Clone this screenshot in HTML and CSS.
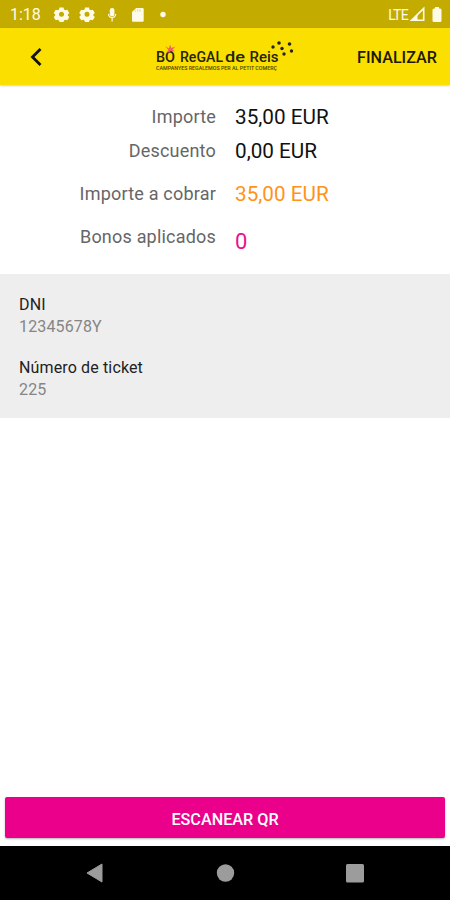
FILE: index.html
```
<!DOCTYPE html>
<html lang="es">
<head>
  <meta charset="utf-8">
  <title>Bo Regal de Reis</title>
  <link rel="stylesheet" href="styles.css">
</head>
<body>
  <div class="app">
    <div class="status-bar">
      <span class="status-time">1:18</span>
      <svg class="status-icons" width="120" height="28" viewBox="0 0 120 28" fill="#fffbe8">
        <g id="gear">
          <path fill-rule="evenodd" d="M11.5 7.5h4l.5 2 1.3.8 2-.6 2 3.4-1.5 1.4v1l1.5 1.4-2 3.4-2-.6-1.3.8-.5 1.5h-4l-.5-1.5-1.3-.8-2 .6-2-3.4 1.5-1.4v-1l-1.5-1.4 2-3.4 2 .6 1.3-.8zM13.5 11.8a2.500 2.500 0 1 0 0 5 2.500 2.500 0 0 0 0-5z"/>
        </g>
        <use href="#gear" x="25.5"/>
        <rect x="61.8" y="8" width="4.600" height="8.500" rx="2.300"/>
        <path d="M60.500 14a3.600 3.600 0 0 0 7.200 0M64.100 17.500v4" fill="none" stroke="#fffbe8" stroke-width="1.200"/>
        <path d="M88.200 8h6.300q1.200 0 1.200 1.200v11.300q0 1.200-1.200 1.200h-9.300q-1.200 0-1.200-1.200v-8.500z"/>
        <path d="M87.300 9.800v2M89.700 9v2.800M92.100 9v2.800" stroke="#c4ab00" stroke-width=".4"/>
        <circle cx="115" cy="14.500" r="2.700"/>
      </svg>
      <span class="status-network">LTE</span>
      <svg class="status-signal" width="34" height="28" viewBox="0 0 34 28" fill="#fffbe8">
        <path d="M3.500 20.300L15.700 8.500v11.800z" fill="none" stroke="#fffbe8" stroke-width="1.600"/>
        <path d="M3 21l6.500-6.500V21z"/>
        <path d="M27 7h4v1.500h1q1.500 0 1.500 1.500v10.500q0 1.500-1.500 1.500h-6q-1.500 0-1.500-1.500V10q0-1.500 1.500-1.500h1z"/>
      </svg>
    </div>

    <div class="toolbar">
      <a href="#" class="toolbar-back">
        <svg width="14" height="20" viewBox="0 0 14 20" fill="none" stroke="#111" stroke-width="2.800">
          <path d="M11.500 2L3.500 10l8 8"/>
        </svg>
      </a>
      <svg class="toolbar-logo" width="142" height="36" viewBox="0 0 142 36">
        <g class="logo-name">
          <text x="1" y="24.800" textLength="19" lengthAdjust="spacingAndGlyphs">BO</text>
          <text x="25" y="24.800" textLength="43" lengthAdjust="spacingAndGlyphs">ReGAL</text>
          <text x="70" y="24.800" textLength="20" lengthAdjust="spacingAndGlyphs">de</text>
          <text x="94.500" y="24.800" textLength="29" lengthAdjust="spacingAndGlyphs">Reis</text>
        </g>
        <text class="logo-tagline" x="1" y="33" textLength="121" lengthAdjust="spacingAndGlyphs">CAMPANYES REGALEMOS PER AL PETIT COMERÇ</text>
        <path d="M10 9l4 2.500 1-4 1.500 3.500 4-1.500-3 3 2.500 2-4-.5-3.500 2 .5-3.500z" fill="#f0645a"/>
        <g fill="#222">
          <circle cx="118" cy="10" r="1.700"/>
          <circle cx="124" cy="6" r="1.800"/>
          <circle cx="127" cy="11.500" r="1.700"/>
          <circle cx="134.500" cy="7" r="1.800"/>
          <circle cx="129" cy="17" r="1.700"/>
          <circle cx="136.500" cy="14" r="1.700"/>
        </g>
      </svg>
      <a href="#" class="toolbar-action">FINALIZAR</a>
    </div>

    <div class="summary">
      <div class="summary-row">
        <span class="summary-label">Importe</span>
        <span class="summary-value">35,00 EUR</span>
      </div>
      <div class="summary-row">
        <span class="summary-label">Descuento</span>
        <span class="summary-value">0,00 EUR</span>
      </div>
      <div class="summary-row summary-total">
        <span class="summary-label">Importe a cobrar</span>
        <span class="summary-value">35,00 EUR</span>
      </div>
      <div class="summary-row summary-vouchers">
        <span class="summary-label">Bonos aplicados</span>
        <span class="summary-value">0</span>
      </div>
    </div>

    <dl class="details">
      <dt>DNI</dt>
      <dd>12345678Y</dd>
      <dt>Número de ticket</dt>
      <dd>225</dd>
    </dl>

    <div class="content"></div>

    <button class="scan-button">ESCANEAR QR</button>

    <div class="nav-bar">
      <svg width="20" height="22" viewBox="0 0 20 22"><path d="M2 11L17 2v18z" fill="#9c9c9c" stroke="#9c9c9c" stroke-linejoin="round"/></svg>
      <svg width="20" height="22" viewBox="0 0 20 22"><circle cx="10.500" cy="11" r="8.700" fill="#9c9c9c"/></svg>
      <svg width="20" height="22" viewBox="0 0 20 22"><rect x="1" y="2" width="18" height="18.500" rx="1.500" fill="#9c9c9c"/></svg>
    </div>
  </div>
</body>
</html>
```

FILE: styles.css
```
body {
  font-family: Roboto, "Liberation Sans", sans-serif;
  background-color: #fff;
  margin: 0;
}

.app {
  display: flex;
  flex-direction: column;
  height: 900px;
}

.status-bar {
  display: flex;
  align-items: center;
  height: 28px;
  padding: 0 8px 0 10px;
  background-color: #c4ab00;
  color: #fffbe8;
}

.status-time {
  width: 38px;
  padding-top: 1px;
  font-size: 16px;
}

.status-network {
  margin-left: auto;
  padding-top: 1px;
  font-size: 14px;
  letter-spacing: -0.7px;
}

.toolbar {
  display: flex;
  align-items: center;
  height: 57px;
  padding-right: 13px;
  background-color: #fbdf00;
  box-shadow: 0 1px 2px rgba(0, 0, 0, 0.2);
}

.toolbar-back {
  display: flex;
  margin-left: 29px;
}

.toolbar-logo {
  margin: 0 0 4px 112px;
}

.logo-name {
  font-size: 15px;
  font-weight: 500;
  fill: #26230a;
}

.logo-tagline {
  font-size: 4.5px;
  font-weight: 500;
  fill: #4a4200;
}

.toolbar-action {
  margin-left: auto;
  padding-top: 2px;
  color: #1c1900;
  font-size: 16.2px;
  font-weight: 500;
  text-decoration: none;
}

.summary {
  height: 171px;
  padding-top: 18px;
  box-sizing: border-box;
  margin-bottom: 18px;
}

.summary-row {
  display: grid;
  grid-template-columns: 216px 1fr;
  column-gap: 19px;
  height: 28px;
  line-height: 28px;
  margin-bottom: 6px;
}

.summary-label {
  color: #666;
  font-size: 18px;
  letter-spacing: 0.2px;
  text-align: right;
}

.summary-value {
  color: #111;
  font-size: 20.7px;
}

.summary-total {
  margin: 15px 0;
}

.summary-total .summary-value {
  color: #ff9317;
}

.summary-vouchers .summary-value {
  padding-top: 5px;
  color: #e8128c;
  font-size: 22px;
}

.details {
  margin: 0;
  height: 144px;
  padding: 20px 19px 0;
  box-sizing: border-box;
  background-color: #eee;
  font-size: 16px;
  letter-spacing: 0.14px;
  line-height: 22px;
}

.details dt {
  color: #222;
}

.details dd {
  margin: 0 0 19px;
  color: #858585;
}

.content {
  flex: 1;
}

.scan-button {
  height: 41px;
  margin: 0 5px 8px 5px;
  padding-top: 4px;
  border: none;
  border-radius: 2px;
  background-color: #eb008b;
  box-shadow: 0 1px 2px rgba(0, 0, 0, 0.3);
  color: #fff;
  font-family: inherit;
  font-size: 16.2px;
  font-weight: 500;
  cursor: pointer;
}

.nav-bar {
  display: flex;
  justify-content: space-between;
  align-items: center;
  height: 54px;
  padding: 0 85px;
  box-sizing: border-box;
  background-color: #000;
}
```
